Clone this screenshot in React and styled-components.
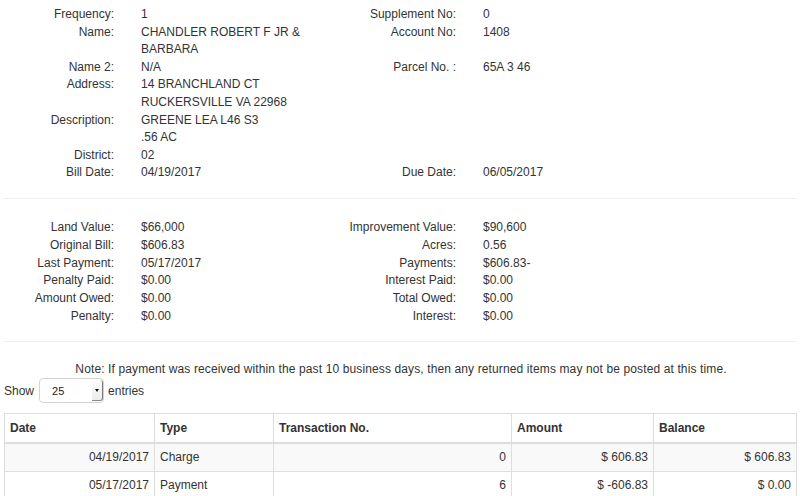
import React from "react";
import styled, { createGlobalStyle } from "styled-components";

const Global = createGlobalStyle`
  body {
    margin: 0;
    background: #fff;
    font-family: "Liberation Sans", Arial, Helvetica, sans-serif;
    font-size: 12px;
    color: #333;
  }
`;

const Page = styled.div`
  padding-top: 6px;
  width: 800px;
`;

const InfoGrid = styled.div`
  display: grid;
  grid-template-columns: 114px 227px 115px 1fr;
  line-height: ${(p) => p.$lh || "17.6px"};
`;

const Label = styled.div`
  text-align: right;
  white-space: nowrap;
`;

const Value = styled.div`
  padding-left: 27px;
  padding-right: ${(p) => (p.$wide ? "0" : "20px")};
`;

const Rule = styled.hr`
  border: 0;
  border-top: 1px solid #eee;
  margin: ${(p) => p.$m};
`;

const Note = styled.p`
  margin: 0;
  text-align: center;
  line-height: 17.6px;
  padding-left: 2px;
  letter-spacing: 0.12px;
`;

const ShowRow = styled.div`
  display: flex;
  align-items: center;
  height: 25px;
  padding-left: 4px;
  gap: 4px;
`;

const Select = styled.div`
  width: 65px;
  height: 25px;
  box-sizing: border-box;
  border: 1px solid #d4d4d4;
  border-radius: 4px;
  display: flex;
  align-items: center;
  justify-content: space-between;
  font-size: 11px;
  color: #222;
  padding-left: 12px;
  margin: 0 0 0 1px;
  overflow: hidden;
`;

const Caret = styled.span`
  width: 11px;
  height: 21px;
  margin-top: 1px;
  align-self: flex-start;
  box-sizing: border-box;
  border-right: 1px solid #777;
  border-bottom: 1px solid #888;
  border-radius: 0 3px 3px 0;
  background: linear-gradient(#fdfdfd, #ececec);
  display: flex;
  align-items: center;
  justify-content: center;
  &::after {
    content: "";
    border-left: 2.5px solid transparent;
    border-right: 2.5px solid transparent;
    border-top: 3px solid #111;
  }
`;

const Table = styled.table`
  margin: 10px 3px 0 4px;
  width: 793px;
  border-collapse: collapse;
  table-layout: fixed;
  border: 1px solid #ddd;
`;

const Th = styled.th`
  text-align: left;
  font-weight: bold;
  padding: 5px;
  line-height: 18px;
  border: 1px solid #ddd;
  border-bottom: 2px solid #ddd;
`;

const Row = styled.tr`
  background: ${(p) => (p.$striped ? "#f9f9f9" : "#fff")};
`;

const Td = styled.td`
  padding: 5px;
  line-height: 17px;
  border: 1px solid #ddd;
  text-align: ${(p) => (p.$left ? "left" : "right")};
`;

const top = [
  ["Frequency:", "1", "Supplement No:", "0"],
  ["Name:", "CHANDLER ROBERT F JR & BARBARA", "Account No:", "1408"],
  ["Name 2:", "N/A", "Parcel No. :", "65A 3 46"],
  ["Address:", ["14 BRANCHLAND CT", "RUCKERSVILLE VA 22968"], "", ""],
  ["Description:", ["GREENE LEA L46 S3", ".56 AC"], "", ""],
  ["District:", "02", "", ""],
  ["Bill Date:", "04/19/2017", "Due Date:", "06/05/2017"],
];

const money = [
  ["Land Value:", "$66,000", "Improvement Value:", "$90,600"],
  ["Original Bill:", "$606.83", "Acres:", "0.56"],
  ["Last Payment:", "05/17/2017", "Payments:", "$606.83-"],
  ["Penalty Paid:", "$0.00", "Interest Paid:", "$0.00"],
  ["Amount Owed:", "$0.00", "Total Owed:", "$0.00"],
  ["Penalty:", "$0.00", "Interest:", "$0.00"],
];

const history = [
  ["04/19/2017", "Charge", "0", "$ 606.83", "$ 606.83"],
  ["05/17/2017", "Payment", "6", "$ -606.83", "$ 0.00"],
];

function Lines({ v }) {
  if (Array.isArray(v)) return v.map((l) => <div key={l}>{l}</div>);
  return v;
}

function Info({ rows, lh }) {
  return (
    <InfoGrid $lh={lh}>
      {rows.map((r) => (
        <React.Fragment key={r[0]}>
          <Label>{r[0]}</Label>
          <Value>
            <Lines v={r[1]} />
          </Value>
          <Label>{r[2]}</Label>
          <Value $wide>{r[3]}</Value>
        </React.Fragment>
      ))}
    </InfoGrid>
  );
}

export default function App() {
  return (
    <Page>
      <Global />
      <Info rows={top} />
      <Rule $m="16px 3px 20px 3px" />
      <Info rows={money} lh="17.8px" />
      <Rule $m="15px 3px 19px 3px" />
      <Note>
        Note: If payment was received within the past 10 business days, then any returned items may not be posted at this time.
      </Note>
      <ShowRow>
        Show
        <Select>
          25
          <Caret />
        </Select>
        entries
      </ShowRow>
      <Table>
        <colgroup>
          <col style={{ width: 150 }} />
          <col style={{ width: 119 }} />
          <col style={{ width: 238 }} />
          <col style={{ width: 142 }} />
          <col />
        </colgroup>
        <thead>
          <tr>
            <Th>Date</Th>
            <Th>Type</Th>
            <Th>Transaction No.</Th>
            <Th>Amount</Th>
            <Th>Balance</Th>
          </tr>
        </thead>
        <tbody>
          {history.map((h, i) => (
            <Row key={h[0]} $striped={i % 2 === 0}>
              <Td>{h[0]}</Td>
              <Td $left>{h[1]}</Td>
              <Td>{h[2]}</Td>
              <Td>{h[3]}</Td>
              <Td>{h[4]}</Td>
            </Row>
          ))}
        </tbody>
      </Table>
    </Page>
  );
}
